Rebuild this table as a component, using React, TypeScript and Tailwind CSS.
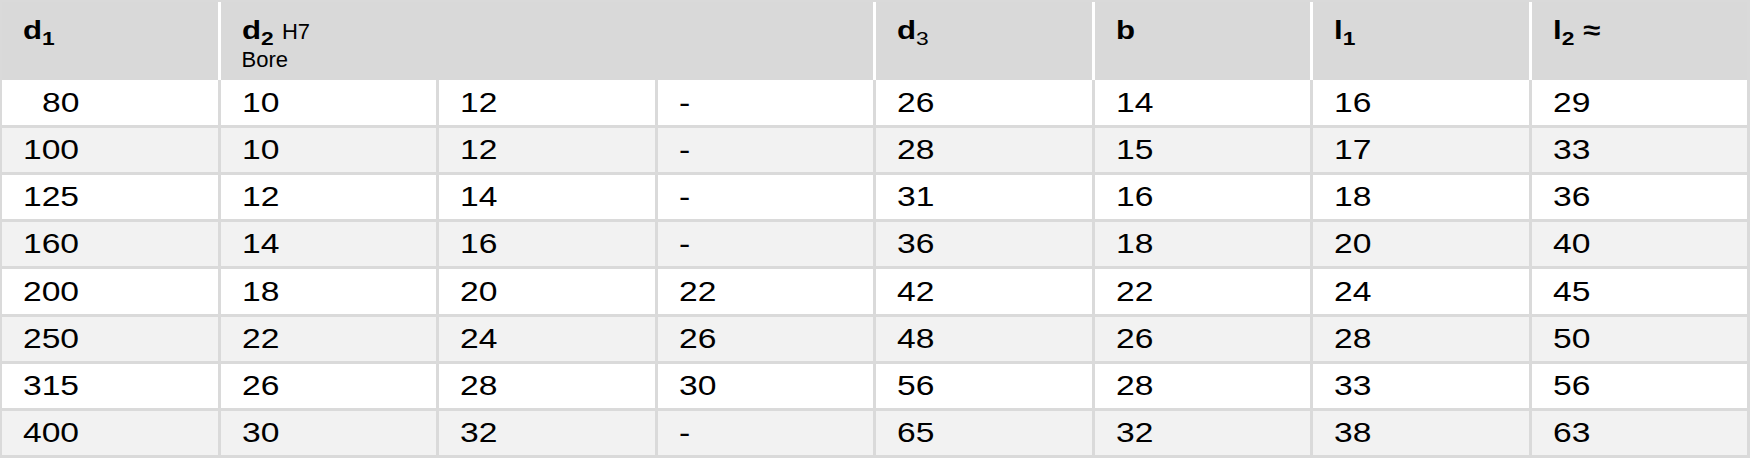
import React from "react";

const rows: string[][] = [
  ["80", "10", "12", "-", "26", "14", "16", "29"],
  ["100", "10", "12", "-", "28", "15", "17", "33"],
  ["125", "12", "14", "-", "31", "16", "18", "36"],
  ["160", "14", "16", "-", "36", "18", "20", "40"],
  ["200", "18", "20", "22", "42", "22", "24", "45"],
  ["250", "22", "24", "26", "48", "26", "28", "50"],
  ["315", "26", "28", "30", "56", "28", "33", "56"],
  ["400", "30", "32", "-", "65", "32", "38", "63"],
];

const font = { fontFamily: '"Liberation Sans", Arial, sans-serif' };

function Sub({ children, bold = true }: { children: React.ReactNode; bold?: boolean }) {
  return (
    <span className={`relative top-[6px] text-[19px] ${bold ? "font-bold" : "font-normal"}`}>{children}</span>
  );
}

function Wide({ children }: { children: React.ReactNode }) {
  return <span className="inline-block origin-left scale-x-[1.2] whitespace-pre">{children}</span>;
}

const headCell = "bg-[#d9d9d9] pl-[21px] pt-[13px] text-[26px] font-bold leading-[30px]";

export default function App() {
  return (
    <div className="bg-white w-[1755px] h-[463px]" style={font}>
      <div className="w-[1750px] bg-[#dadada] pt-[2px] pl-[2px] pr-[3px] pb-[3px]">
        {/* header */}
        <div className="grid grid-cols-8 gap-x-[3px] bg-white h-[78px] text-black">
          <div className={headCell}>
            <Wide>
              d<Sub>1</Sub>
            </Wide>
          </div>
          <div className={`${headCell} col-span-3`}>
            <div className="flex items-baseline">
              <Wide>
                d<Sub>2</Sub>
              </Wide>
              <span className="font-normal text-[22px] ml-[14px]">H7</span>
            </div>
            <div className="text-[22px] font-normal leading-[24px]">Bore</div>
          </div>
          <div className={headCell}>
            <Wide>
              d<Sub bold={false}>3</Sub>
            </Wide>
          </div>
          <div className={headCell}>
            <Wide>b</Wide>
          </div>
          <div className={headCell}>
            <Wide>
              l<Sub>1</Sub>
            </Wide>
          </div>
          <div className={headCell}>
            <Wide>
              l<Sub>2</Sub> ≈
            </Wide>
          </div>
        </div>
        {/* body */}
        <div className="flex flex-col gap-y-[3px]">
          {rows.map((r, i) => (
            <div key={i} className="grid grid-cols-8 gap-x-[3px]">
              {r.map((c, j) => (
                <div
                  key={j}
                  className={`${i === 0 || i === 4 ? "h-[45px]" : "h-[44px]"} flex items-center text-[28px] text-black ${
                    i % 2 === 0 ? "bg-white" : "bg-[#f2f2f2]"
                  } ${j === 0 && c === "80" ? "pl-[40px]" : "pl-[21px]"}`}
                >
                  <Wide>{c}</Wide>
                </div>
              ))}
            </div>
          ))}
        </div>
      </div>
    </div>
  );
}
